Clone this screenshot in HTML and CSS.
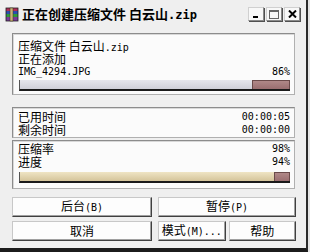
FILE: index.html
```html
<!DOCTYPE html>
<html lang="zh-CN">
<head>
  <meta charset="UTF-8">
  <title>正在创建压缩文件 白云山.zip</title>
  <link rel="stylesheet" href="styles.css">
</head>
<body>
  <div class="window">
    <div class="titlebar">
      <svg class="app-icon" width="14" height="15" viewBox="0 0 14 15">
        <rect x="1" y="1" width="12" height="3" fill="#b0305a"/>
        <rect x="1" y="4" width="12" height="3" fill="#2a4fb0"/>
        <rect x="1" y="7" width="12" height="3" fill="#2f9a3a"/>
        <rect x="1" y="10" width="12" height="4" fill="#7a3a9a"/>
        <rect x="1" y="1" width="12" height="13" fill="none" stroke="#202020" stroke-width="0.8"/>
        <rect x="5" y="1" width="3" height="13" fill="#c9b27a" stroke="#403010" stroke-width="0.5"/>
      </svg>
      <h1 class="title">正在创建压缩文件 白云山<span class="en">.zip</span></h1>
      <div class="title-buttons">
        <span class="tbtn">
          <svg width="8" height="8" viewBox="0 0 8 8"><rect x="1" y="6" width="5" height="2" fill="#000"/></svg>
        </span>
        <span class="tbtn">
          <svg width="10" height="9" viewBox="0 0 10 9"><rect x="0.5" y="0.5" width="9" height="8" fill="none" stroke="#666"/><rect x="0" y="0" width="10" height="2" fill="#666"/></svg>
        </span>
        <span class="tbtn">
          <svg width="9" height="8" viewBox="0 0 9 8"><path d="M1 0.5 L8 7.5 M8 0.5 L1 7.5" stroke="#000" stroke-width="2"/></svg>
        </span>
      </div>
    </div>

    <div class="content">
      <div class="panel file-panel">
        <div class="line">压缩文件 白云山<span class="en">.zip</span></div>
        <div class="line">正在添加</div>
        <div class="line row">
          <span class="en">IMG_4294.JPG</span>
          <span class="en">86%</span>
        </div>
        <div class="bar gray">
          <div class="fill" style="width: 86%"></div>
          <div class="rest"></div>
        </div>
      </div>

      <div class="panel time-panel">
        <div class="line row"><span>已用时间</span><span class="en">00:00:05</span></div>
        <div class="line row"><span>剩余时间</span><span class="en">00:00:00</span></div>
      </div>

      <div class="panel total-panel">
        <div class="line row"><span>压缩率</span><span class="en">98%</span></div>
        <div class="line row"><span>进度</span><span class="en">94%</span></div>
        <div class="bar tan">
          <div class="fill" style="width: 94%"></div>
          <div class="rest"></div>
        </div>
      </div>

      <div class="buttons">
        <button class="btn">后台<span class="en">(B)</span></button>
        <button class="btn">暂停<span class="en">(P)</span></button>
        <button class="btn">取消</button>
        <div class="btn-pair">
          <button class="btn">模式<span class="en">(M)...</span></button>
          <button class="btn">帮助</button>
        </div>
      </div>
    </div>
  </div>
</body>
</html>
```

FILE: styles.css
```css
* {
  margin: 0;
  padding: 0;
  box-sizing: border-box;
}

body {
  width: 310px;
  height: 252px;
  background: #e4e4e4;
  font-family: "Noto Sans CJK SC", sans-serif;
  font-size: 12px;
  color: #000;
  overflow: hidden;
}

.en {
  font-family: "DejaVu Sans Mono", "Liberation Mono", monospace;
  font-size: 10px;
}

.window {
  width: 308px;
  height: 252px;
  background: #efefef;
  border-right: 2px solid #2a2a2a;
  border-bottom: 4px solid #1c1c1c;
}

/* Title bar */
.titlebar {
  height: 28px;
  display: flex;
  align-items: center;
  padding: 0 6px 0 5px;
}

.app-icon {
  flex-shrink: 0;
  margin-right: 3px;
}

.title {
  font-size: 13px;
  font-weight: bold;
  line-height: 16px;
  white-space: nowrap;
}

.title .en {
  font-size: 12px;
  font-weight: bold;
}

.title-buttons {
  margin-left: auto;
  display: flex;
  gap: 2px;
}

.tbtn {
  width: 16px;
  height: 14px;
  display: flex;
  align-items: center;
  justify-content: center;
  background: #f8f8f8;
  border: 1px solid #8a8a8a;
  border-top-color: #d0d0d0;
  border-left-color: #d0d0d0;
  box-shadow: 1px 1px 0 #505050;
}

/* Panels */
.content {
  padding: 5px 11px 0 12px;
}

.panel {
  background: #fbfbfb;
  border: 1px solid #8c8c8c;
  border-right-color: #b0b0b0;
  border-bottom-color: #b0b0b0;
  box-shadow: inset 1px 1px 0 #d8d8d8;
}

.line {
  line-height: 13px;
  height: 13px;
  white-space: nowrap;
}

.row {
  display: flex;
  justify-content: space-between;
}

.file-panel {
  padding: 5px 4px 3px 5px;
}

.file-panel .bar {
  margin-top: 2px;
}

.time-panel {
  margin-top: 12px;
  padding: 2px 4px 1px 5px;
}

.total-panel {
  margin-top: 2px;
  padding: 1px 4px 5px 5px;
}

.bar {
  margin-top: 4px;
  margin-left: 1px;
  height: 11px;
  display: flex;
  border-left: 1px solid #555;
  border-bottom: 2px solid #1a1a1a;
}

.bar .rest {
  flex: 1;
  background: linear-gradient(#b08888, #9a6e70);
  border: 1px solid #6a4a4a;
  border-bottom: none;
}

.gray .fill {
  background: linear-gradient(#e6e6ec, #cfcfd8);
}

.tan .fill {
  background: linear-gradient(#efe4c4, #d4c49a);
}

/* Buttons */
.buttons {
  margin-top: 8px;
  display: grid;
  grid-template-columns: 140px 1fr;
  column-gap: 6px;
  row-gap: 4px;
  margin-right: -1px;
}

.btn-pair {
  display: flex;
  gap: 3px;
}

.btn-pair .btn {
  flex: 1;
}

.btn {
  height: 20px;
  font-family: "Noto Sans CJK SC", sans-serif;
  font-size: 12px;
  line-height: 16px;
  color: #000;
  background: #fdfdfd;
  border: 1px solid #c8c8c8;
  border-right-color: #404040;
  border-bottom-color: #404040;
  box-shadow: inset -1px -1px 0 #a0a0a0;
  white-space: nowrap;
}
```
